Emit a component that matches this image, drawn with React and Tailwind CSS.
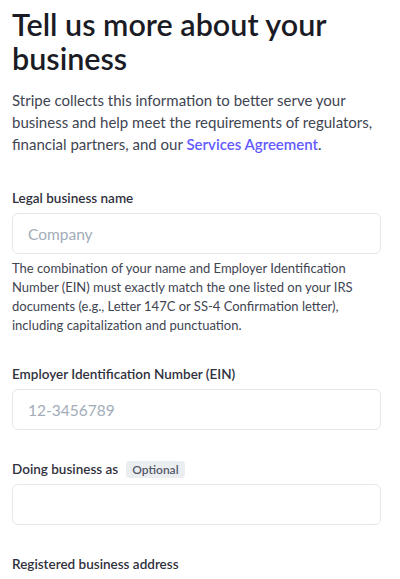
import React from "react";

const Field = ({ label, optional, placeholder, hint }) => (
  <div className="flex flex-col">
    <label className="flex items-center gap-2 text-[13.5px] font-semibold leading-5 text-[#30313d]">
      {label}
      {optional && (
        <span className="rounded-[4px] bg-[#ebeef1] px-[6px] text-[12px] font-semibold leading-[17px] text-[#545969]">
          Optional
        </span>
      )}
    </label>
    <input
      placeholder={placeholder}
      className="mt-[5px] h-[41px] w-full rounded-[6px] border border-[#e3e8ee] bg-white px-[15px] text-[15.5px] text-[#30313d] placeholder:text-[#a3acb9] outline-none"
    />
    {hint && (
      <p className="mt-[5px] text-[13px] leading-[19px] text-[#414552]">{hint}</p>
    )}
  </div>
);

export default function App() {
  return (
    <div
      className="min-h-screen bg-white pl-3 pr-[19px] pt-[7px]"
      style={{ fontFamily: 'Lato, "Liberation Sans", sans-serif' }}
    >
      <h1 className="text-[30.5px] font-semibold leading-[34px] text-[#1a1b25]">
        Tell us more about your business
      </h1>
      <p className="mt-[14px] text-[15px] leading-[22px] text-[#414552]">
        Stripe collects this information to better serve your business and help meet the
        requirements of regulators, financial partners, and our{" "}
        <a href="#" className="font-semibold text-[#635bff]">
          Services Agreement
        </a>
        .
      </p>

      <div className="mt-[33px] flex flex-col gap-[29px]">
        <Field
          label="Legal business name"
          placeholder="Company"
          hint="The combination of your name and Employer Identification Number (EIN) must exactly match the one listed on your IRS documents (e.g., Letter 147C or SS-4 Confirmation letter), including capitalization and punctuation."
        />
        <Field label="Employer Identification Number (EIN)" placeholder="12-3456789" />
        <Field label="Doing business as" optional placeholder="" />
        <div className="text-[13.5px] font-semibold leading-5 text-[#30313d]">
          Registered business address
        </div>
      </div>
    </div>
  );
}
